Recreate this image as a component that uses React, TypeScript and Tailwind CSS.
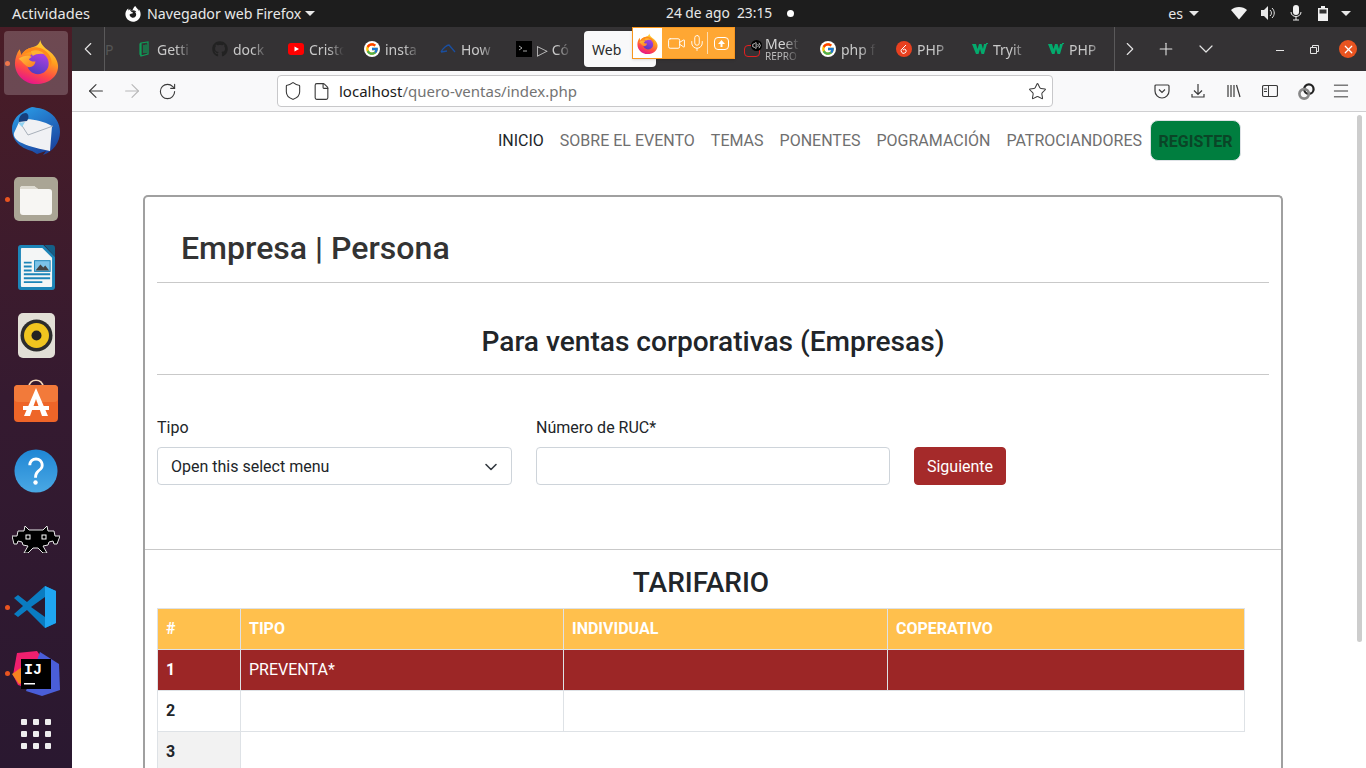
import React from "react";
import { ArrowLeft, ArrowRight, RotateCw, Shield, File, Star, Menu, ChevronLeft, ChevronRight, ChevronDown, Plus, X, Video, Mic, Volume2 } from "lucide-react";
import { FaFirefoxBrowser, FaGithub } from "react-icons/fa";
import { FcGoogle } from "react-icons/fc";

const Firefox = ({ size, id }: { size: number; id: string }) => (
  <svg width={size} height={size} viewBox="0 0 48 48">
    <defs>
      <linearGradient id={id + "a"} x1="0.75" y1="0" x2="0.35" y2="1">
        <stop offset="0" stopColor="#ffe03d" />
        <stop offset="0.4" stopColor="#ff9f1f" />
        <stop offset="0.72" stopColor="#ff4a45" />
        <stop offset="1" stopColor="#e5148e" />
      </linearGradient>
      <linearGradient id={id + "b"} x1="0.7" y1="0" x2="0.3" y2="1">
        <stop offset="0" stopColor="#b13fe0" />
        <stop offset="1" stopColor="#4f3cc0" />
      </linearGradient>
      <linearGradient id={id + "c"} x1="0" y1="0" x2="1" y2="1">
        <stop offset="0" stopColor="#ffc23a" />
        <stop offset="1" stopColor="#ff7a22" />
      </linearGradient>
    </defs>
    <path d="M28 1c1 6 6 9 11 13 6 5 8 11 8 15 0 11-10 19-23 19C11 48 1 38 1 26c0-5 2-11 5-15l2 6c2-4 6-7 11-8 4-1 8-3 9-8z" fill={`url(#${id}a)`} />
    <path d="M8 17c3-6 10-9 17-8 8 1 14 7 15 15 0 2 0 3-1 5-1-5-4-11-10-14-7-3-15-1-21 2z" fill="#ff8a1c" />
    <circle cx="25.500" cy="26" r="11.500" fill={`url(#${id}b)`} />
    <path d="M5 21c4-3 10-4 14-2-1 1-3 2-3 3 2 2 5 2 7 2-1 4-3 6-7 6-4-1-7-6-11-9z" fill={`url(#${id}c)`} />
    <path d="M18 13c5-2 11-1 14 3-4-1-9 0-12 2z" fill="#ffb330" />
  </svg>
);

const Thunderbird = () => (
  <svg width="48" height="48" viewBox="0 0 48 48">
    <defs>
      <linearGradient id="tb" x1="0.2" y1="0" x2="0.8" y2="1">
        <stop offset="0" stopColor="#2a9be6" />
        <stop offset="1" stopColor="#1a3f9c" />
      </linearGradient>
    </defs>
    <path d="M20 0c6 1 10 1 15 4 8 4 13 12 13 21 0 10-7 20-17 23l3-4-9 3-5-3c-9-2-20-9-20-22C0 14 5 8 11 5c2-2 5-4 9-5z" fill="url(#tb)" />
    <path d="M8 13c8-2 22 0 32 6l-2 25c-9-2-20-4-28-8-5-2-9-6-8-10z" fill="#f0f1f4" />
    <path d="M7 14l9 14 25-9" fill="none" stroke="#a8b0ba" strokeWidth="1" />
    <path d="M7 15c-1-4 2-9 7-9 3 1 3 5 1 8z" fill="#173f7d" />
    <path d="M6 16l7-1-3 5z" fill="#8fd2f2" />
  </svg>
);

const Files = () => (
  <svg width="44" height="44" viewBox="0 0 44 44">
    <rect width="44" height="44" rx="5" fill="#aaa595" />
    <path d="M6 12a3 3 0 013-3h11l4 3h11a3 3 0 013 3v20a3 3 0 01-3 3H9a3 3 0 01-3-3z" fill="#f7f6f3" />
    <path d="M6 12a3 3 0 013-3h11l4 3z" fill="#dedbd2" />
  </svg>
);

const Writer = () => (
  <svg width="37" height="45" viewBox="0 0 38 46">
    <path d="M3 0h23l12 12v31a3 3 0 01-3 3H3a3 3 0 01-3-3V3a3 3 0 013-3z" fill="#1c85b8" />
    <path d="M4 3h21l10 10v29a1 1 0 01-1 1H4a1 1 0 01-1-1V4a1 1 0 011-1z" fill="#f4f6f6" />
    <path d="M27 0h8a3 3 0 013 3v9z" fill="#155f87" />
    <path d="M6 17h8v2H6zM6 21h8v2H6zM6 25h8v2H6zM6 29h27v2H6zM6 33h27v2H6zM6 37h19v2H6z" fill="#1c85b8" />
    <rect x="17" y="16" width="16" height="11" fill="#7cc3e8" stroke="#1c85b8" />
    <path d="M18 26l5-6 3 3 2-2 4 5z" fill="#444" />
  </svg>
);

const Rhythmbox = () => (
  <svg width="37" height="45" viewBox="0 0 37 45">
    <rect width="37" height="45" rx="5" fill="#e2dfd6" />
    <circle cx="18.500" cy="22.500" r="16" fill="#2c2c2c" />
    <circle cx="18.500" cy="22.500" r="12.500" fill="#f0c51f" />
    <circle cx="18.500" cy="22.500" r="5" fill="#222" />
  </svg>
);

const AppStore = () => (
  <svg width="44" height="43" viewBox="0 0 44 43">
    <path d="M15 8c0-9 14-9 14 0" fill="none" stroke="#f3d7b8" strokeWidth="1.600" />
    <rect x="0" y="6" width="44" height="37" rx="4" fill="#ee6528" />
    <rect x="0" y="6" width="44" height="17" rx="4" fill="#f27a3a" />
    <path d="M22 9l12 28h-6l-6-17-6 17h-6z" fill="#fff" />
    <rect x="9" y="27" width="26" height="4" fill="#fff" />
  </svg>
);

const Help = () => (
  <svg width="44" height="44" viewBox="0 0 46 46">
    <defs>
      <linearGradient id="hp" x1="0" y1="0" x2="0" y2="1">
        <stop offset="0" stopColor="#1f86d4" />
        <stop offset="1" stopColor="#4aa8e4" />
      </linearGradient>
    </defs>
    <circle cx="23" cy="23" r="22.500" fill="url(#hp)" />
    <path d="M15 17c0-5 4-8 8-8s8 3 8 8c0 6-7 6-7 13h-3c0-9 7-8 7-13 0-3-2-5-5-5s-5 2-5 5z" fill="#fff" />
    <circle cx="22.500" cy="35" r="2.300" fill="#fff" />
  </svg>
);

const Retro = () => (
  <svg width="48" height="28" viewBox="0 0 48 28">
    <path d="M13 1l4 4h14l4-4 1 5h6l1 5h5l-3 8h-3l-1-3-4 1-1 3-5 1 4 7h-4l-5-5H21l-5 5h-4l4-7-5-1-1-3-4-1-1 3H2l-2-8h5l1-5h6z" fill="#000" stroke="#e8e8e8" strokeWidth="1" />
    <rect x="14" y="10" width="4" height="4" fill="#000" stroke="#fff" />
    <rect x="30" y="10" width="4" height="4" fill="#000" stroke="#fff" />
  </svg>
);

const VSCode = () => (
  <svg width="44" height="44" viewBox="0 0 44 44">
    <path d="M31 1l11 5v32l-11 5L13 25 4 32l-4-3 9-8-9-8 4-3 9 7z" fill="#0a7cc1" />
    <path d="M31 1l11 5v32l-11 5z" fill="#1fa5f1" />
    <path d="M31 12L17 22l14 10z" fill="#2a1a30" />
  </svg>
);

const IntelliJ = () => (
  <svg width="48" height="48" viewBox="0 0 48 48">
    <path d="M5 3l20-2 7 10-8 30-18-6-5-10z" fill="#f01f6e" />
    <path d="M0 24l10-7 6 14-9 3z" fill="#f58220" />
    <path d="M28 2l19 12 1 26-18 6-16-5z" fill="#4a5ed8" />
    <rect x="9" y="9" width="30" height="30" fill="#000" />
    <text x="12" y="24" fontSize="15" fontWeight="700" fontFamily="'Liberation Mono', monospace" fill="#fff">IJ</text>
    <path d="M12 33h11v1.500H12z" fill="#fff" />
  </svg>
);

const W3 = () => (
  <svg width="16" height="12" viewBox="0 0 16 12">
    <path d="M0 1h4l1.500 5L7 1h2.500l1.500 5 1-5h3l-3 10H9.500L8 6l-1.500 5H4z" fill="#04aa6d" />
    <path d="M14 0h2v1h-2z" fill="#04aa6d" />
  </svg>
);

const G = () => (
  <span className="w-4 h-4 rounded-full bg-white flex items-center justify-center"><FcGoogle size={14} /></span>
);

const tabs = [
  { icon: <svg width="16" height="16" viewBox="0 0 16 16"><path d="M5 2l7-1v12l-7 2zM5 2L4 3v10l1 2M8 4v8M10 3.500v8.500" fill="none" stroke="#0f9d58" strokeWidth="1.200" /></svg>, t: "Getti" },
  { icon: <FaGithub size={16} color="#222" />, t: "dock" },
  { icon: <svg width="16" height="12" viewBox="0 0 16 12"><rect width="16" height="12" rx="3" fill="#f00" /><path d="M6.500 3.500v5L11 6z" fill="#fff" /></svg>, t: "Cristo" },
  { icon: <G />, t: "insta" },
  { icon: <svg width="16" height="16" viewBox="0 0 16 16"><path d="M1 11C3 7 7 4 9 4l6 7M1 11l6-1" fill="none" stroke="#1a4fa0" strokeWidth="1.300" /></svg>, t: "How" },
  { icon: <svg width="16" height="16" viewBox="0 0 16 16"><rect width="16" height="16" fill="#000" /><path d="M3 5l3 2-3 2M7 10h4" fill="none" stroke="#ccc" strokeWidth="0.800" /></svg>, t: "▷ Có" },
];
const tabsAfter = [
  {
    icon: (
      <span className="relative w-4 h-4">
        <span className="block w-4 h-[12px] mt-[4px] border border-[#e02020] rounded-sm" />
        <span className="absolute -top-[1px] left-[7px] w-[11px] h-[11px] rounded-full bg-black flex items-center justify-center"><Volume2 size={9} className="text-white" /></span>
      </span>
    ),
    t: "Meet",
    sub: "REPRO",
  },
  { icon: <G />, t: "php f" },
  { icon: <svg width="16" height="16" viewBox="0 0 16 16"><circle cx="8" cy="8" r="8" fill="#e8401f" /><path d="M10 4L6 8a2.500 2.500 0 104 1 2 2 0 00-3 0" fill="none" stroke="#fff" strokeWidth="1" /></svg>, t: "PHP" },
  { icon: <W3 />, t: "Tryit" },
  { icon: <W3 />, t: "PHP" },
];

const Tab = ({ icon, t, sub }: { icon: React.ReactNode; t: string; sub?: string }) => (
  <div className="w-[76px] shrink-0 flex items-center pl-2 gap-[5px] overflow-hidden">
    <span className="w-4 h-4 shrink-0 flex items-center">{icon}</span>
    <div className="w-[35px] overflow-hidden whitespace-nowrap [mask-image:linear-gradient(to_right,black_55%,transparent)]">
      <div className={sub ? "text-[14px] leading-[15px] text-[#d4d4d4]" : "text-[14px] text-[#c9c9c9]"}>{t}</div>
      {sub && <div className="text-[10px] leading-[11px] text-[#bdbdbd]">{sub}</div>}
    </div>
  </div>
);

const dockDot = "absolute left-[5px] w-[5px] h-[5px] rounded-full bg-[#e95420]";

const DockItem = ({ children, dot, active, h }: { children: React.ReactNode; dot?: boolean; active?: boolean; h: string }) => (
  <div className={`relative shrink-0 flex items-center justify-center w-[72px] ${h}`}>
    {dot && <span className={dockDot} />}
    {active && <span className="absolute left-1 right-1 top-1 bottom-1 rounded bg-white/20" />}
    <span className="relative flex">{children}</span>
  </div>
);

const Caret = ({ className }: { className?: string }) => (
  <span className={`w-0 h-0 border-x-[5px] border-x-transparent border-t-[5px] border-t-[#e8e8e8] ${className || ""}`} />
);

export default function App() {
  const ui = { fontFamily: '"Noto Sans", sans-serif' };
  return (
    <div className="w-[1366px] h-[768px] overflow-hidden flex flex-col" style={ui}>
      {/* top bar */}
      <div className="h-[27px] shrink-0 bg-[#1d1d1d] text-[#e8e8e8] text-[14.2px] flex items-center relative">
        <span className="ml-3 w-[113px] text-[14.6px]">Actividades</span>
        <FaFirefoxBrowser size={16} className="text-white" />
        <span className="ml-[6px]">Navegador web Firefox</span>
        <Caret className="ml-[4px]" />
        <span className="absolute left-[666px] flex items-center whitespace-nowrap text-[13.8px]">
          24 de ago&nbsp;&nbsp;23:15
          <span className="ml-[15px] w-[7px] h-[7px] rounded-full bg-white" />
        </span>
        <div className="ml-auto flex items-center">
          <span>es</span>
          <Caret className="ml-[6px] mr-[32px]" />
          <svg width="16" height="14" viewBox="0 0 16 14" className="mr-[13px]"><path d="M0 4c4-4 12-4 16 0l-8 9.500z" fill="#f0f0f0" /></svg>
          <svg width="16" height="16" viewBox="0 0 16 16" className="mr-[14px]"><path d="M1 5h3l4-4v14l-4-4H1z" fill="#e8e8e8" /><path d="M10 5c2 2 2 4 0 6M12 3c3 3 3 7 0 10" fill="none" stroke="#e8e8e8" /></svg>
          <svg width="12" height="16" viewBox="0 0 12 16" className="mr-[16px]"><rect x="3" y="0" width="6" height="10" rx="3" fill="#f0f0f0" /><path d="M1 7c0 6 10 6 10 0M6 12v3M3 15h6" fill="none" stroke="#f0f0f0" /></svg>
          <svg width="10" height="15" viewBox="0 0 10 15" className="mr-[13px]"><path d="M3 0h4v2h3v13H0V2h3z" fill="#f0f0f0" /><rect x="1.500" y="3.500" width="7" height="4" fill="#333" /></svg>
          <Caret className="mr-[15px]" />
        </div>
      </div>

      <div className="flex-1 min-h-0 flex">
        {/* dock */}
        <div className="w-[72px] shrink-0 bg-gradient-to-b from-[#4a1c26] via-[#351a30] to-[#2a1830] flex flex-col overflow-hidden">
          <DockItem dot active h="h-[72px]"><span className="flex -mt-[3px]"><Firefox size={45} id="ff1" /></span></DockItem>
          <DockItem h="h-[64px]"><Thunderbird /></DockItem>
          <DockItem dot h="h-[72px]"><Files /></DockItem>
          <DockItem h="h-[65px]"><Writer /></DockItem>
          <DockItem h="h-[71px]"><Rhythmbox /></DockItem>
          <DockItem h="h-[58px]"><AppStore /></DockItem>
          <DockItem h="h-[84px]"><Help /></DockItem>
          <DockItem h="h-[51px]"><Retro /></DockItem>
          <DockItem dot h="h-[86px]"><VSCode /></DockItem>
          <DockItem dot h="h-[47px]"><IntelliJ /></DockItem>
          <DockItem h="h-[74px]">
            <span className="grid grid-cols-3 gap-[6px]">
              {Array.from({ length: 9 }).map((_, i) => (
                <span key={i} className="w-[6px] h-[6px] rounded-[1px] bg-[#eeeeee]" />
              ))}
            </span>
          </DockItem>
        </div>

        <div className="flex-1 min-w-0 flex flex-col">
          {/* tab bar */}
          <div className="h-[44px] shrink-0 bg-[#343234] flex items-stretch relative">
            <div className="w-[33px] shrink-0 border-r border-[#5a595a] flex items-center justify-center">
              <ChevronLeft size={22} strokeWidth={1.2} className="text-[#e4e4e4]" />
            </div>
            <div className="w-[1009px] shrink-0 flex overflow-hidden">
              <div className="w-[23px] shrink-0 text-[14px] text-[#555] flex items-center overflow-hidden">P</div>
              {tabs.map((t) => <Tab key={t.t} {...t} />)}
              <div className="w-[76px] shrink-0 py-[4px] pr-[4px]">
                <div className="h-full bg-[#f9f9fa] rounded-[4px] text-[14px] text-[#2b2b2b] flex items-center pl-2 shadow">Web</div>
              </div>
              <div className="w-[76px] shrink-0" />
              {tabsAfter.map((t) => <Tab key={t.t + (t.sub || "")} {...t} />)}
            </div>
            <div className="flex-1 border-l border-[#5a595a] flex items-center text-[#e4e4e4]">
              <ChevronRight size={22} strokeWidth={1.2} className="ml-[4px]" />
              <Plus size={20} strokeWidth={1.3} className="ml-[15px]" />
              <ChevronDown size={24} strokeWidth={1.2} className="ml-[18px]" />
              <span className="ml-[58px] w-[8px] h-px bg-[#e4e4e4] mt-[3px]" />
              <svg width="9" height="9" viewBox="0 0 9 9" className="ml-[26px]"><path d="M2.500 2.500V.5h6v6h-2M.5 2.500h6v6h-6z" fill="none" stroke="#e4e4e4" /></svg>
              <span className="ml-[20px] w-[18px] h-[18px] rounded-full bg-[#e95420] flex items-center justify-center">
                <X size={13} strokeWidth={2.2} className="text-white" />
              </span>
            </div>
            {/* sharing indicator */}
            <div className="absolute left-[560px] top-0 w-[103px] h-[32px] border border-[#f8961e] bg-[#ffa733] flex items-center shadow">
              <span className="w-[29px] h-full bg-white flex items-center justify-center"><Firefox size={21} id="ff2" /></span>
              <Video size={19} strokeWidth={1.2} className="ml-[5px] text-white" />
              <Mic size={18} strokeWidth={1.2} className="ml-[2px] text-white" />
              <span className="ml-[1px] w-px h-[22px] bg-white/60" />
              <span className="ml-[6px] w-[15px] h-[13px] border border-white rounded-sm text-white flex items-center justify-center">
                <svg width="9" height="9" viewBox="0 0 9 9"><path d="M4.500 1L8 5H5.500v3h-2V5H1z" fill="#fff" /></svg>
              </span>
            </div>
          </div>

          {/* toolbar */}
          <div className="h-[41px] shrink-0 bg-[#f9f9fa] border-b border-[#cfcfd1] flex items-center relative text-[#3a3a3a]">
            <ArrowLeft size={22} strokeWidth={1.2} className="ml-[13px]" />
            <ArrowRight size={22} strokeWidth={1.2} className="ml-[14px] text-[#b8b8b8]" />
            <RotateCw size={19} strokeWidth={1.4} className="ml-[15px]" />
            <div className="ml-[100px] w-[776px] h-[32px] bg-white border border-[#c8c8ca] rounded-[4px] flex items-center">
              <Shield size={20} strokeWidth={1.3} className="ml-[5px]" />
              <File size={19} strokeWidth={1.4} className="ml-[9px]" />
              <span className="ml-[8px] text-[15px] text-[#1a1a1a]">localhost<span className="text-[#737373]">/quero-ventas/index.php</span></span>
              <Star size={19} strokeWidth={1.3} className="ml-auto mr-[5px]" />
            </div>
            <div className="ml-[101px] flex items-center gap-[20px]">
              <svg width="16" height="16" viewBox="0 0 16 16"><path d="M2 2h12a1 1 0 011 1v5a7 7 0 01-14 0V3a1 1 0 011-1z" fill="none" stroke="#3a3a3a" strokeWidth="1.200" /><path d="M5 6.500l3 3 3-3" fill="none" stroke="#3a3a3a" strokeWidth="1.200" /></svg>
              <svg width="16" height="16" viewBox="0 0 16 16"><path d="M8 1v10M4 7.500L8 11.500l4-4M2 11v3h12v-3" fill="none" stroke="#3a3a3a" strokeWidth="1.200" /></svg>
              <svg width="16" height="16" viewBox="0 0 16 16"><path d="M2 2v12M5 2v12M8 2v12M10.500 2L14 14" fill="none" stroke="#3a3a3a" strokeWidth="1.200" /></svg>
              <svg width="16" height="16" viewBox="0 0 16 16"><rect x="0.500" y="2.500" width="15" height="11" rx="1.500" fill="none" stroke="#3a3a3a" strokeWidth="1.200" /><path d="M6.500 3v10M2 6h3M2 8.500h3" stroke="#3a3a3a" /></svg>
              <svg width="17" height="17" viewBox="0 0 18 18" className="-mr-px"><circle cx="11.500" cy="6.500" r="5" fill="none" stroke="#222" strokeWidth="2.400" /><circle cx="6.500" cy="11.500" r="5" fill="none" stroke="#888" strokeWidth="2.800" /></svg>
              <Menu size={20} strokeWidth={1.2} className="-ml-[3px]" />
            </div>
          </div>

          {/* page */}
          <div className="flex-1 min-h-0 bg-white relative overflow-hidden text-[#212529]" style={{ fontFamily: "Roboto, sans-serif" }}>
            <span className="absolute right-[4px] top-[3px] w-[5px] h-[527px] rounded bg-[#cdcdcd]" />
            <nav className="flex items-center justify-end pr-[125px] pt-[9px] h-[49px] text-[16px] text-[#6f6f6f]">
              <a className="text-[#212529] mr-4">INICIO</a>
              <a className="mr-4">SOBRE EL EVENTO</a>
              <a className="mr-4">TEMAS</a>
              <a className="mr-4">PONENTES</a>
              <a className="mr-4">POGRAMACIÓN</a>
              <a className="mr-2">PATROCIANDORES</a>
              <span className="w-[91px] h-[41px] -mt-px pt-[2px] rounded-[8px] border border-[#dee2e6] bg-[#007e3f] text-[#0a4527] font-bold flex items-center justify-center">REGISTER</span>
            </nav>
            <div className="ml-[71px] mt-[34px] w-[1140px] h-[640px] border-2 border-[#a0a0a0] rounded-[5px] border-b-0">
              <div className="px-3">
                <h2 className="pl-6 pt-[32px] pb-[15px] leading-[38px] text-[32.1px] font-medium text-[#333]">Empresa | Persona</h2>
                <div className="border-t border-[#c9c9c9]" />
                <h3 className="text-center pt-[42px] pb-[15px] leading-[34px] text-[28.1px] font-medium">Para ventas corporativas (Empresas)</h3>
                <div className="border-t border-[#c9c9c9]" />
                <div className="flex items-end gap-6 pt-[41px]">
                  <label className="w-[355px] block">
                    <span className="block leading-[24px] mb-[7px]">Tipo</span>
                    <span className="h-[38px] pt-px border border-[#ced4da] rounded-[4px] flex items-center justify-between pl-[13px] pr-[12px]">
                      Open this select menu
                      <svg width="16" height="16" viewBox="0 0 16 16"><path d="M3 5.500l5 5 5-5" fill="none" stroke="#343a40" strokeWidth="1.600" strokeLinecap="round" strokeLinejoin="round" /></svg>
                    </span>
                  </label>
                  <label className="w-[354px] block">
                    <span className="block leading-[24px] mb-[7px]">Número de RUC*</span>
                    <span className="block h-[38px] border border-[#ced4da] rounded-[4px]" />
                  </label>
                  <button className="w-[92px] h-[38px] pt-px bg-[#a52a2a] text-white rounded-[4px] border border-[#a52a2a]">Siguiente</button>
                </div>
              </div>
              <div className="mt-[64px] border-t border-[#c9c9c9]" />
              <div className="px-3">
                <h3 className="w-[1088px] text-center pt-[16px] pb-[8px] leading-[34px] text-[28px] font-medium">TARIFARIO</h3>
                <table className="w-[1087px] table-fixed border-collapse">
                  <colgroup>
                    <col className="w-[83px]" />
                    <col className="w-[323px]" />
                    <col className="w-[324px]" />
                    <col className="w-[357px]" />
                  </colgroup>
                  <tbody>
                    <tr className="h-[41px] bg-[#ffc04d] text-white font-bold text-left">
                      <th className="border border-[#dee2e6] px-2">#</th>
                      <th className="border border-[#dee2e6] px-2">TIPO</th>
                      <th className="border border-[#dee2e6] px-2">INDIVIDUAL</th>
                      <th className="border border-[#dee2e6] px-2">COPERATIVO</th>
                    </tr>
                    <tr className="h-[41px] bg-[#9c2626] text-white text-left">
                      <th className="border border-[#dee2e6] px-2">1</th>
                      <td className="border border-[#dee2e6] px-2">PREVENTA*</td>
                      <td className="border border-[#dee2e6] px-2" />
                      <td className="border border-[#dee2e6] px-2" />
                    </tr>
                    <tr className="h-[41px] text-left">
                      <th className="border border-[#dee2e6] px-2">2</th>
                      <td className="border border-[#dee2e6] px-2" />
                      <td className="border border-[#dee2e6] px-2" colSpan={2} />
                    </tr>
                    <tr className="h-[41px] text-left">
                      <th className="border border-[#dee2e6] px-2 bg-[#f2f2f2]">3</th>
                    </tr>
                  </tbody>
                </table>
              </div>
            </div>
          </div>
        </div>
      </div>
    </div>
  );
}
